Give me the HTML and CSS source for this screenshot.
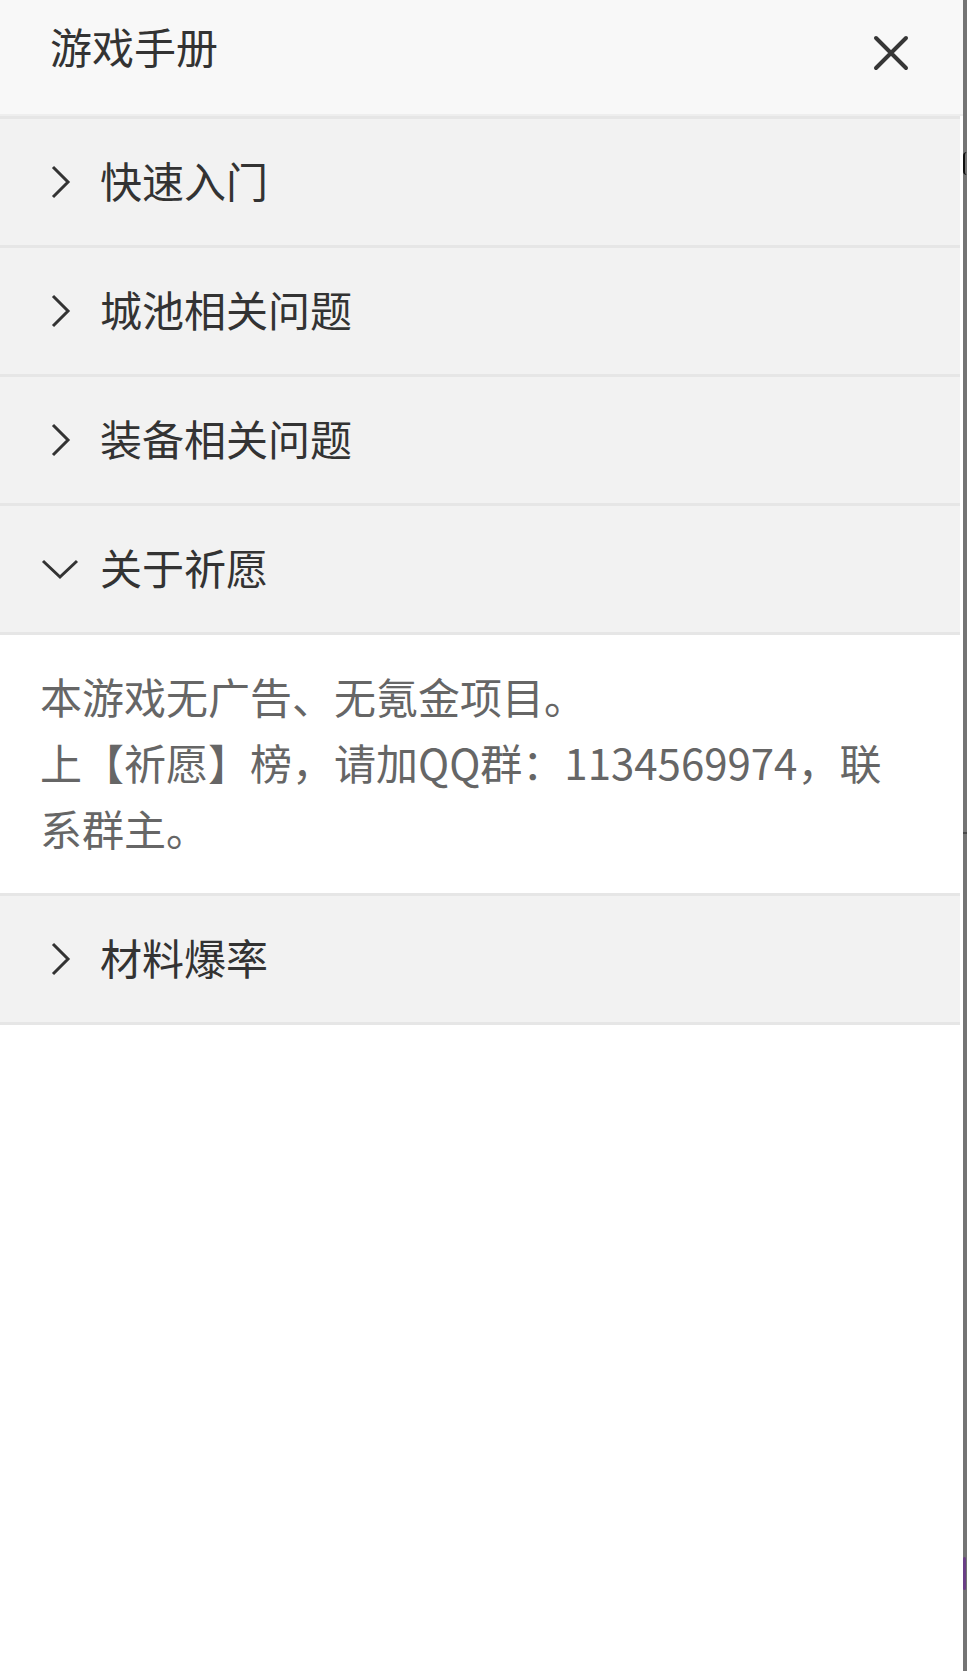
FILE: index.html
```html
<!DOCTYPE html>
<html lang="zh-CN">
<head>
<meta charset="utf-8">
<title>游戏手册</title>
<link rel="stylesheet" href="styles.css">
</head>
<body>
<div class="page">
  <aside class="drawer">
    <header class="drawer-head">
      <h1 class="drawer-title">游戏手册</h1>
      <button class="close-btn" aria-label="关闭">
        <svg viewBox="0 0 36 36" width="36" height="36"><path d="M3 3 L33 33 M33 3 L3 33" fill="none" stroke="#363636" stroke-width="4" stroke-linecap="round"/></svg>
      </button>
    </header>
    <div class="acc">
      <div class="acc-item">
        <span class="acc-icon"><svg viewBox="0 0 21 34" width="21" height="34"><path d="M3 2 L18 17 L3 32" fill="none" stroke="#333" stroke-width="3"/></svg></span>
        <span class="acc-label">快速入门</span>
      </div>
      <div class="acc-item">
        <span class="acc-icon"><svg viewBox="0 0 21 34" width="21" height="34"><path d="M3 2 L18 17 L3 32" fill="none" stroke="#333" stroke-width="3"/></svg></span>
        <span class="acc-label">城池相关问题</span>
      </div>
      <div class="acc-item">
        <span class="acc-icon"><svg viewBox="0 0 21 34" width="21" height="34"><path d="M3 2 L18 17 L3 32" fill="none" stroke="#333" stroke-width="3"/></svg></span>
        <span class="acc-label">装备相关问题</span>
      </div>
      <div class="acc-item open">
        <span class="acc-icon"><svg viewBox="0 0 38 22" width="38" height="22"><path d="M2 3 L19 19 L36 3" fill="none" stroke="#333" stroke-width="3"/></svg></span>
        <span class="acc-label">关于祈愿</span>
      </div>
      <div class="acc-body">
        <p class="acc-text">本游戏无广告、无氪金项目。<br>上【祈愿】榜，请加QQ群：1134569974，联系群主。</p>
      </div>
      <div class="acc-item last">
        <span class="acc-icon"><svg viewBox="0 0 21 34" width="21" height="34"><path d="M3 2 L18 17 L3 32" fill="none" stroke="#333" stroke-width="3"/></svg></span>
        <span class="acc-label">材料爆率</span>
      </div>
    </div>
  </aside>
  <div class="backdrop">
    <span class="bg-mark mark-a"></span>
    <span class="bg-mark mark-b"></span>
    <span class="bg-mark mark-c"></span>
  </div>
</div>
</body>
</html>
```

FILE: styles.css
```css
* { box-sizing: border-box; }
html, body { margin: 0; padding: 0; }
body {
  font-family: "Noto Sans CJK SC", "Noto Sans", sans-serif;
  background: #ffffff;
}
.page {
  display: flex;
  width: 967px;
  height: 1671px;
  overflow: hidden;
}
.drawer {
  width: 963px;
  height: 1671px;
  background: #ffffff;
  display: flex;
  flex-direction: column;
}
.drawer-head {
  height: 116px;
  background: #f8f8f8;
  border-bottom: 2px solid #eeeeee;
  display: flex;
  justify-content: space-between;
  align-items: flex-start;
  padding: 18px 54px 0 50px;
}
.drawer-title {
  margin: 0;
  font-size: 42px;
  line-height: 56px;
  font-weight: 400;
  color: #333333;
}
.close-btn {
  margin-top: 17px;
  width: 36px;
  height: 36px;
  padding: 0;
  border: 0;
  background: transparent;
  display: block;
}
.close-btn svg { display: block; filter: blur(0.4px); }
.acc {
  margin-right: 3px;
  display: flex;
  flex-direction: column;
}
.acc-item {
  height: 129px;
  border-top: 3px solid #e6e6e6;
  background: #f2f2f2;
  display: flex;
  align-items: center;
  padding: 0 0 0 40px;
}
.acc-item.last {
  height: 132px;
  border-bottom: 3px solid #e6e6e6;
}
.acc-icon {
  width: 40px;
  height: 40px;
  display: flex;
  align-items: center;
  justify-content: center;
  flex: none;
}
.acc-icon svg { display: block; }
.acc-label {
  margin-left: 20px;
  margin-bottom: 4px;
  font-size: 42px;
  line-height: 56px;
  color: #333333;
}
.acc-body {
  background: #ffffff;
  border-top: 3px solid #e6e6e6;
  padding: 28px 60px 32px 40px;
}
.acc-text {
  margin: 0;
  font-size: 42px;
  line-height: 66px;
  color: #666666;
}
.backdrop {
  flex: 1;
  height: 1671px;
  background: #747474;
  position: relative;
}
.bg-mark { position: absolute; left: 0; display: block; }
.mark-a {
  top: 152px;
  width: 4px;
  height: 23px;
  border-left: 2px solid #111111;
  border-radius: 4px 0 0 4px;
}
.mark-b {
  top: 832px;
  width: 4px;
  height: 2px;
  background: #4a4a4a;
}
.mark-c {
  top: 1557px;
  width: 3px;
  height: 33px;
  background: #6a3f86;
  border-radius: 2px;
}
```
